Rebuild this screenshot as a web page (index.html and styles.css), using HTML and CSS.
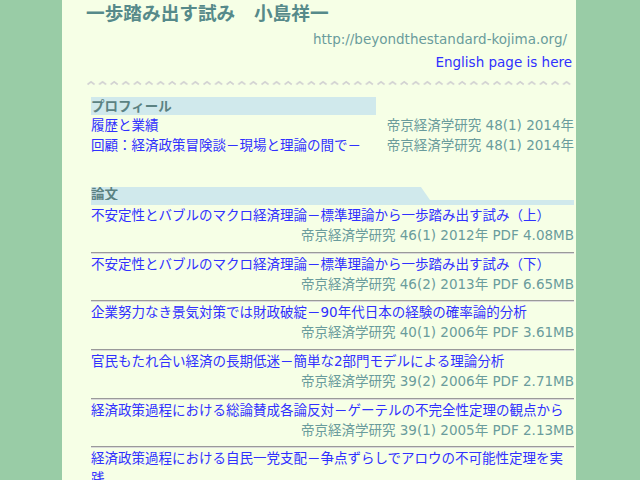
FILE: index.html
```html
<html lang="ja">
<head>
    <meta charset="utf-8">
    <link rel="stylesheet" href="styles.css">
</head>
<body>
    <div class="page">
        <h1 class="site-title">一歩踏み出す試み　小島祥一</h1>
        <div class="site-url">http://beyondthestandard-kojima.org/</div>
        <div class="lang-link"><a href="#">English page is here</a></div>
        <svg class="wave" width="100%" height="6">
            <defs>
                <pattern id="chev" width="11.6" height="6" patternUnits="userSpaceOnUse">
                    <polyline points="1.5,4.5 5,1.8 8.5,4.5" fill="none" stroke="#d2d2d2" stroke-width="1.6"/>
                </pattern>
            </defs>
            <rect width="100%" height="6" fill="url(#chev)"/>
        </svg>

        <div class="section">
            <h2 class="sec-title">プロフィール</h2>
            <div class="row">
                <a href="#">履歴と業績</a>
                <span class="meta">帝京経済学研究 48(1) 2014年</span>
            </div>
            <div class="row">
                <a href="#">回顧：経済政策冒険談－現場と理論の間で－</a>
                <span class="meta">帝京経済学研究 48(1) 2014年</span>
            </div>
        </div>

        <div class="section papers">
            <h2 class="sec-title slant"><span>論文</span></h2>
            <div class="paper">
                <a href="#">不安定性とバブルのマクロ経済理論－標準理論から一歩踏み出す試み（上）</a>
                <div class="meta">帝京経済学研究 46(1) 2012年 PDF 4.08MB</div>
            </div>
            <div class="paper">
                <a href="#">不安定性とバブルのマクロ経済理論－標準理論から一歩踏み出す試み（下）</a>
                <div class="meta">帝京経済学研究 46(2) 2013年 PDF 6.65MB</div>
            </div>
            <div class="paper">
                <a href="#">企業努力なき景気対策では財政破綻－90年代日本の経験の確率論的分析</a>
                <div class="meta">帝京経済学研究 40(1) 2006年 PDF 3.61MB</div>
            </div>
            <div class="paper">
                <a href="#">官民もたれ合い経済の長期低迷－簡単な2部門モデルによる理論分析</a>
                <div class="meta">帝京経済学研究 39(2) 2006年 PDF 2.71MB</div>
            </div>
            <div class="paper">
                <a href="#">経済政策過程における総論賛成各論反対－ゲーテルの不完全性定理の観点から</a>
                <div class="meta">帝京経済学研究 39(1) 2005年 PDF 2.13MB</div>
            </div>
            <div class="paper">
                <a href="#">経済政策過程における自民一党支配－争点ずらしでアロウの不可能性定理を実践</a>
                <div class="meta">帝京経済学研究 38(2) 2005年 PDF 2.05MB</div>
            </div>
        </div>
    </div>
</body>
</html>
```

FILE: styles.css
```css
body {
    margin: 0;
    background-color: #99cca6;
    font-family: "DejaVu Sans", "Noto Sans CJK JP", sans-serif;
    font-size: 13.5px;
    line-height: 20px;
}
a {
    color: #3030ff;
    text-decoration: none;
}
.page {
    width: 514px;
    margin-left: 62px;
    min-height: 100vh;
    box-sizing: border-box;
    padding: 0 2px 10px 24px;
    background-color: #f6ffe6;
}
.site-title {
    margin: 0;
    font-size: 18.67px;
    line-height: 28px;
    font-weight: bold;
    color: #568a8a;
}
.site-url {
    margin-top: 1px;
    padding-right: 7px;
    text-align: right;
    color: #6a9c9c;
}
.lang-link {
    margin-top: 3px;
    padding-right: 2px;
    text-align: right;
}
.wave {
    display: block;
    width: 486px;
    margin-top: 8px;
}
.section {
    margin-left: 5px;
}
.sec-title {
    margin: 11px 0 0;
    width: 285px;
    height: 18px;
    font-size: 13.5px;
    line-height: 18px;
    font-weight: bold;
    color: #5b8282;
    background-color: #d0e9ec;
}
.row {
    display: grid;
    grid-template-columns: 1fr auto;
}
.meta {
    text-align: right;
    color: #6a9c9c;
}
.papers .sec-title {
    margin-top: 32px;
}
.sec-title.slant {
    width: auto;
    box-sizing: border-box;
    background-color: transparent;
    border-bottom: 5px solid #d0e9ec;
}
.sec-title.slant span {
    display: block;
    width: 339px;
    height: 13px;
    line-height: 14px;
    background-color: #d0e9ec;
    clip-path: polygon(0 0, calc(100% - 9px) 0, 100% 100%, 0 100%);
}
.paper {
    padding-bottom: 6.7px;
    border-bottom: 1px solid #9a9a9a;
    box-shadow: 0 1px 0 #dadada;
    margin-bottom: 1px;
}
.paper a {
    display: block;
}
```
